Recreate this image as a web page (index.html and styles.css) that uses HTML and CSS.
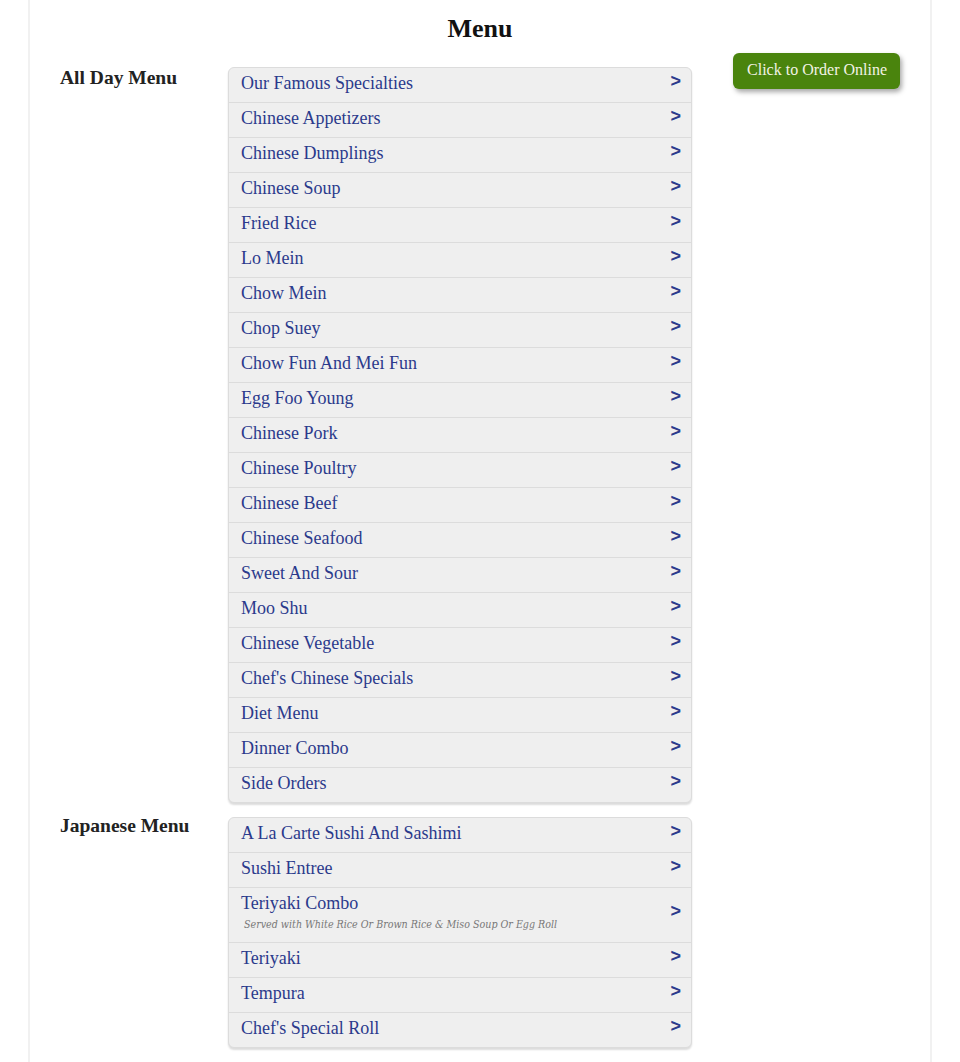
FILE: index.html
```html
<!DOCTYPE html>
<html>
<head>
<meta charset="utf-8">
<title>Menu</title>
<link rel="stylesheet" href="styles.css">
</head>
<body>
<div class="page">
  <h1 class="title">Menu</h1>

  <section class="menu-section">
    <h2 class="cat-label">All Day Menu</h2>
    <ul class="cat-list">
      <li class="cat-row"><div class="cat-text"><span class="cat-name">Our Famous Specialties</span></div><span class="arrow">&gt;</span></li>
      <li class="cat-row"><div class="cat-text"><span class="cat-name">Chinese Appetizers</span></div><span class="arrow">&gt;</span></li>
      <li class="cat-row"><div class="cat-text"><span class="cat-name">Chinese Dumplings</span></div><span class="arrow">&gt;</span></li>
      <li class="cat-row"><div class="cat-text"><span class="cat-name">Chinese Soup</span></div><span class="arrow">&gt;</span></li>
      <li class="cat-row"><div class="cat-text"><span class="cat-name">Fried Rice</span></div><span class="arrow">&gt;</span></li>
      <li class="cat-row"><div class="cat-text"><span class="cat-name">Lo Mein</span></div><span class="arrow">&gt;</span></li>
      <li class="cat-row"><div class="cat-text"><span class="cat-name">Chow Mein</span></div><span class="arrow">&gt;</span></li>
      <li class="cat-row"><div class="cat-text"><span class="cat-name">Chop Suey</span></div><span class="arrow">&gt;</span></li>
      <li class="cat-row"><div class="cat-text"><span class="cat-name">Chow Fun And Mei Fun</span></div><span class="arrow">&gt;</span></li>
      <li class="cat-row"><div class="cat-text"><span class="cat-name">Egg Foo Young</span></div><span class="arrow">&gt;</span></li>
      <li class="cat-row"><div class="cat-text"><span class="cat-name">Chinese Pork</span></div><span class="arrow">&gt;</span></li>
      <li class="cat-row"><div class="cat-text"><span class="cat-name">Chinese Poultry</span></div><span class="arrow">&gt;</span></li>
      <li class="cat-row"><div class="cat-text"><span class="cat-name">Chinese Beef</span></div><span class="arrow">&gt;</span></li>
      <li class="cat-row"><div class="cat-text"><span class="cat-name">Chinese Seafood</span></div><span class="arrow">&gt;</span></li>
      <li class="cat-row"><div class="cat-text"><span class="cat-name">Sweet And Sour</span></div><span class="arrow">&gt;</span></li>
      <li class="cat-row"><div class="cat-text"><span class="cat-name">Moo Shu</span></div><span class="arrow">&gt;</span></li>
      <li class="cat-row"><div class="cat-text"><span class="cat-name">Chinese Vegetable</span></div><span class="arrow">&gt;</span></li>
      <li class="cat-row"><div class="cat-text"><span class="cat-name">Chef's Chinese Specials</span></div><span class="arrow">&gt;</span></li>
      <li class="cat-row"><div class="cat-text"><span class="cat-name">Diet Menu</span></div><span class="arrow">&gt;</span></li>
      <li class="cat-row"><div class="cat-text"><span class="cat-name">Dinner Combo</span></div><span class="arrow">&gt;</span></li>
      <li class="cat-row"><div class="cat-text"><span class="cat-name">Side Orders</span></div><span class="arrow">&gt;</span></li>
    </ul>
    <div class="order-col">
      <a class="order-btn" href="#">Click to Order Online</a>
    </div>
  </section>

  <section class="menu-section">
    <h2 class="cat-label">Japanese Menu</h2>
    <ul class="cat-list">
      <li class="cat-row"><div class="cat-text"><span class="cat-name">A La Carte Sushi And Sashimi</span></div><span class="arrow">&gt;</span></li>
      <li class="cat-row"><div class="cat-text"><span class="cat-name">Sushi Entree</span></div><span class="arrow">&gt;</span></li>
      <li class="cat-row"><div class="cat-text"><span class="cat-name">Teriyaki Combo</span><span class="cat-note">Served with White Rice Or Brown Rice &amp; Miso Soup Or Egg Roll</span></div><span class="arrow">&gt;</span></li>
      <li class="cat-row"><div class="cat-text"><span class="cat-name">Teriyaki</span></div><span class="arrow">&gt;</span></li>
      <li class="cat-row"><div class="cat-text"><span class="cat-name">Tempura</span></div><span class="arrow">&gt;</span></li>
      <li class="cat-row"><div class="cat-text"><span class="cat-name">Chef's Special Roll</span></div><span class="arrow">&gt;</span></li>
    </ul>
    <div class="order-col"></div>
  </section>

  <section class="menu-section">
    <h2 class="cat-label">Lunch Menu</h2>
    <ul class="cat-list">
      <li class="cat-row"><div class="cat-text"><span class="cat-name">Lunch Special</span></div><span class="arrow">&gt;</span></li>
      <li class="cat-row"><div class="cat-text"><span class="cat-name">Sushi Lunch</span></div><span class="arrow">&gt;</span></li>
    </ul>
    <div class="order-col"></div>
  </section>
</div>
</body>
</html>
```

FILE: styles.css
```css
html, body {
  margin: 0;
  padding: 0;
  background: #ffffff;
}

body {
  font-family: "Liberation Serif", "Times New Roman", serif;
  color: #222;
}

.page {
  width: 904px;
  margin: 0 auto;
  border-left: 2px solid #f1f1f1;
  border-right: 2px solid #f1f1f1;
  padding: 0 30px 40px 30px;
  box-sizing: border-box;
}

.title {
  margin: 0;
  padding: 14px 0 0 0;
  height: 67px;
  box-sizing: border-box;
  text-align: center;
  font-size: 26px;
  line-height: 30px;
  font-weight: bold;
  color: #111;
}

.menu-section {
  display: grid;
  grid-template-columns: 168px 464px 1fr;
  align-items: start;
  margin-top: 14px;
}

.menu-section:first-of-type {
  margin-top: 0;
}

.cat-label {
  margin: 0;
  padding-top: 1px;
  font-size: 19.5px;
  line-height: 20px;
  font-weight: bold;
  color: #222;
}

.menu-section + .menu-section .cat-label {
  padding-top: 0;
  margin-top: -1px;
}

.cat-list {
  list-style: none;
  margin: 0;
  padding: 0;
  background: #efefef;
  border: 1px solid #dcdcdc;
  border-radius: 6px;
  box-shadow: 0 2px 2px rgba(0, 0, 0, 0.14);
}

.cat-row {
  display: flex;
  align-items: center;
  justify-content: space-between;
  padding: 5px 10px 9px 12px;
  border-bottom: 1px solid #dcdcdc;
}

.cat-row:last-child {
  border-bottom: none;
}

.cat-text {
  display: flex;
  flex-direction: column;
}

.cat-name {
  font-size: 18px;
  line-height: 20px;
  color: #2b3a8c;
}

.cat-note {
  margin-top: 3px;
  padding-left: 3px;
  font-family: "DejaVu Serif", serif;
  font-stretch: condensed;
  font-style: italic;
  font-size: 10.6px;
  line-height: 17px;
  color: #777;
}

.arrow {
  font-family: "Liberation Sans", Arial, sans-serif;
  font-weight: bold;
  font-size: 18px;
  line-height: 12px;
  color: #2b3a8c;
  margin-bottom: 4px;
}

.order-col {
  display: flex;
  justify-content: flex-end;
}

.order-btn {
  display: block;
  margin-top: -14px;
  padding: 7px 13px 9px 14px;
  background: #4a840d;
  color: #f3f3e6;
  font-size: 16px;
  line-height: 20px;
  text-decoration: none;
  border-radius: 6px;
  box-shadow: 2px 3px 5px rgba(0, 0, 0, 0.35);
}
```
